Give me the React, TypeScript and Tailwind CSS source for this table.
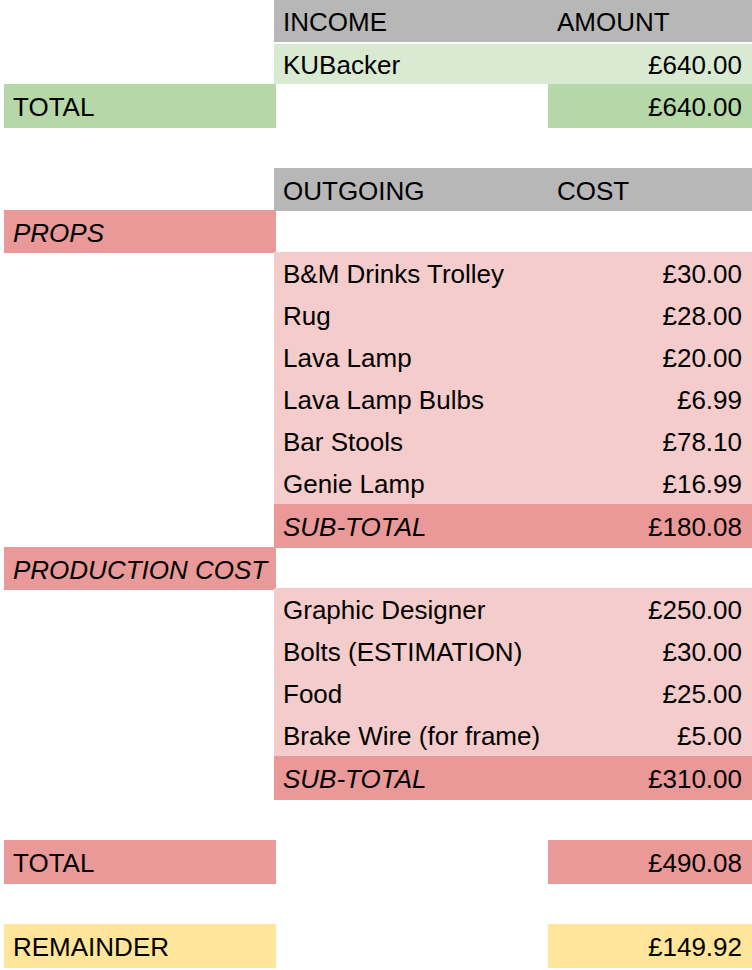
import React from "react";

type Cell = { text?: string; bg?: string; italic?: boolean; right?: boolean; h?: string };
type Row = { a?: Cell; b?: Cell; c?: Cell };

const GREY = "bg-[#b7b7b7]";
const LGREEN = "bg-[#d9ead3]";
const GREEN = "bg-[#b6d7a8]";
const PINK = "bg-[#ea9999]";
const LPINK = "bg-[#f4cccc]";
const YELLOW = "bg-[#ffe599]";

const item = (name: string, cost: string): Row => ({
  b: { text: name, bg: LPINK },
  c: { text: cost, bg: LPINK, right: true },
});

const rows: Row[] = [
  { b: { text: "INCOME", bg: GREY }, c: { text: "AMOUNT", bg: GREY } },
  {
    b: { text: "KUBacker", bg: LGREEN, h: "mt-[2px] h-[40px]" },
    c: { text: "£640.00", bg: LGREEN, right: true, h: "mt-[2px] h-[40px]" },
  },
  {
    a: { text: "TOTAL", bg: GREEN, h: "h-[44px]" },
    c: { text: "£640.00", bg: GREEN, right: true, h: "h-[44px]" },
  },
  {},
  {
    b: { text: "OUTGOING", bg: GREY, h: "h-[43px]" },
    c: { text: "COST", bg: GREY, h: "h-[43px]" },
  },
  { a: { text: "PROPS", bg: PINK, italic: true, h: "h-[43px]" } },
  item("B&M Drinks Trolley", "£30.00"),
  item("Rug", "£28.00"),
  item("Lava Lamp", "£20.00"),
  item("Lava Lamp Bulbs", "£6.99"),
  item("Bar Stools", "£78.10"),
  item("Genie Lamp", "£16.99"),
  {
    b: { text: "SUB-TOTAL", bg: PINK, italic: true, h: "h-[44px]" },
    c: { text: "£180.08", bg: PINK, right: true, h: "h-[44px]" },
  },
  { a: { text: "PRODUCTION COST", bg: PINK, italic: true, h: "mt-[1px] h-[43px]" } },
  item("Graphic Designer", "£250.00"),
  item("Bolts (ESTIMATION)", "£30.00"),
  item("Food", "£25.00"),
  item("Brake Wire (for frame)", "£5.00"),
  {
    b: { text: "SUB-TOTAL", bg: PINK, italic: true, h: "h-[44px]" },
    c: { text: "£310.00", bg: PINK, right: true, h: "h-[44px]" },
  },
  {},
  {
    a: { text: "TOTAL", bg: PINK, h: "h-[44px]" },
    c: { text: "£490.08", bg: PINK, right: true, h: "h-[44px]" },
  },
  {},
  {
    a: { text: "REMAINDER", bg: YELLOW, h: "h-[44px]" },
    c: { text: "£149.92", bg: YELLOW, right: true, h: "h-[44px]" },
  },
];

function CellView({ cell, width, pr }: { cell?: Cell; width: string; pr: string }) {
  if (!cell) return <div className={`${width} shrink-0`} />;
  return (
    <div
      className={`${width} shrink-0 ${cell.h ?? "h-[42px]"} ${cell.bg ?? ""} flex items-center pt-[2px] ${
        cell.right ? `justify-end ${pr}` : "pl-[9px]"
      } ${cell.italic ? "italic" : ""} whitespace-nowrap`}
    >
      {cell.text}
    </div>
  );
}

export default function App() {
  return (
    <div className="w-[752px] h-[970px] bg-white text-black text-[26px] leading-none overflow-hidden font-['Liberation_Sans',Arial,sans-serif]">
      {rows.map((r, i) => (
        <div key={i} className="flex h-[42px] relative">
          <div className="w-[274px] shrink-0 pl-[4px]">
            {r.a ? (
              <div
                className={`w-[272px] ${r.a.h ?? "h-[42px]"} ${r.a.bg ?? ""} flex items-center pt-[2px] pl-[9px] ${
                  r.a.italic ? "italic" : ""
                } whitespace-nowrap relative`}
              >
                {r.a.text}
              </div>
            ) : null}
          </div>
          <CellView cell={r.b} width="w-[274px]" pr="pr-[9px]" />
          <CellView cell={r.c} width="w-[204px]" pr="pr-[10px]" />
        </div>
      ))}
    </div>
  );
}
